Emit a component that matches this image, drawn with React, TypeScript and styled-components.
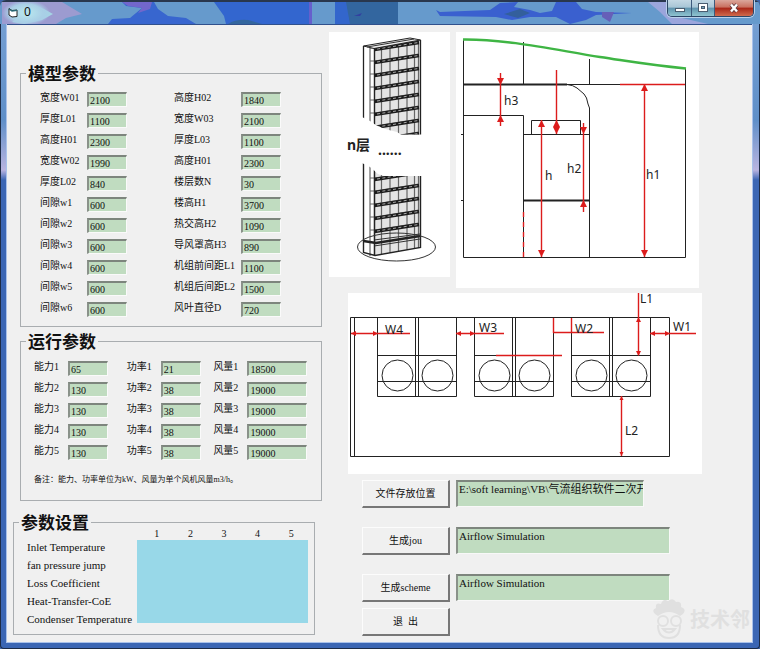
import React, { useState } from "react";
import styled, { createGlobalStyle } from "styled-components";

const GlobalStyle = createGlobalStyle`
  * { box-sizing: border-box; }
  body { margin: 0; background: #3c64ac; }
  body, button, input, textarea, legend, label {
    font-family: "Liberation Serif", "Noto Sans CJK SC", serif;
    color: #111;
  }
`;

const Window = styled.div`
  position: relative;
  display: flex;
  flex-direction: column;
  min-height: 100vh;
  padding: 0 8px 7px 7px;
  background: linear-gradient(#7aa2d4 0, #5f8fc8 120px, #b9b4e0 170px, #3b66b4 180px, #3b66b4 100%);
  border-radius: 6px 6px 4px 4px;
  box-shadow: inset 0 0 0 1px #1d2b45, inset 0 2px 0 0 #3a4a66;
  overflow: hidden;
`;

const TitleBar = styled.header`
  position: relative;
  display: flex;
  justify-content: space-between;
  height: 24px;
  margin: 0 -8px 0 -7px;
  padding: 0 6px 0 8px;
`;

const TitleGlass = styled.svg`
  position: absolute;
  inset: 0;
  width: 100%;
  height: 100%;
`;

const Caption = styled.h1`
  position: relative;
  display: flex;
  align-items: center;
  gap: 6px;
  margin: 0;
  font: 12px/24px "Noto Sans", sans-serif;
`;

const WindowButtons = styled.div`
  position: relative;
  display: flex;
  height: 17px;
  border: 1px solid #2c4666;
  border-top: 0;
  border-radius: 0 0 5px 5px;
  box-shadow: 0 0 0 1px #b9d0ea;
  overflow: hidden;
`;

const WindowButton = styled.button<{ $close?: boolean }>`
  display: grid;
  place-items: center;
  width: ${(p) => (p.$close ? 39 : 23)}px;
  padding: 0;
  border: 0;
  border-left: 1px solid #3d5a7c;
  background: ${(p) =>
    p.$close
      ? "linear-gradient(#dba79c 0, #c9705f 45%, #a92617 50%, #cf6a4d 100%)"
      : "linear-gradient(#c3d8e4 0, #a8c6d6 45%, #5f93ae 50%, #8fc4d0 100%)"};
  &:first-child { border-left: 0; }
`;

const Client = styled.main`
  flex: 1;
  display: grid;
  grid-template-columns: 315fr 373fr;
  column-gap: 7px;
  padding-right: 50px;
  background: #f0f0f0;
  border-top: 1px solid #30508c;
  box-shadow: 0 0 0 1px #a9c1ea;
`;

const Parameters = styled.div`
  display: flex;
  flex-direction: column;
  padding: 42px 0 0 13px;
`;

const Group = styled.fieldset<{ $wide?: boolean }>`
  min-width: 0;
  margin: ${(p) => (p.$wide ? "7px 7px 0 -7px" : "0 0 8px 0")};
  padding: 0;
  border: 1px solid #a9adb0;
`;

const GroupTitle = styled.legend`
  margin-left: 5px;
  padding: 0 2px;
  font: bold 17px/12px "Noto Sans CJK SC", sans-serif;
`;

const ModelGrid = styled.div`
  display: grid;
  grid-template-columns: 134fr 147fr;
  padding: 10px 0 6px 19px;
`;

const Column = styled.div``;

const ModelRow = styled.div<{ $label: number }>`
  display: grid;
  grid-template-columns: ${(p) => p.$label}px 40px;
  align-items: center;
  height: 21px;
`;

const FieldLabel = styled.label`
  font-size: 10px;
  line-height: 16px;
  padding-bottom: 3px;
  white-space: nowrap;
`;

const NumberBox = styled.input`
  width: 100%;
  height: 15px;
  padding: 1px 0 0 1px;
  border: 1px solid #fafafa;
  border-top: 2px solid #7d857d;
  border-left: 2px solid #8a928a;
  border-radius: 0;
  background: #c0dcc0;
  font-size: 10px;
  line-height: 11px;
`;

const RunGrid = styled.div`
  display: grid;
  grid-template-columns: 93fr 87fr 108fr;
  padding: 11px 0 0 13px;
`;

const RunRow = styled.div<{ $box: number }>`
  display: grid;
  grid-template-columns: 34px ${(p) => p.$box}px;
  align-items: center;
  height: 21px;
`;

const Note = styled.p`
  margin: 11px 0 14px 13px;
  font-size: 8px;
  line-height: 12px;
`;

const SettingsGrid = styled.div`
  display: grid;
  grid-template-columns: 123fr 171fr;
  padding: 0 6px 6px 0;
`;

const SettingNames = styled.ul`
  margin: 10px 0 0;
  padding: 0 0 0 13px;
  list-style: none;
  font-size: 11px;
  line-height: 18px;
  white-space: nowrap;
`;

const SettingHeads = styled.div`
  display: grid;
  grid-template-columns: repeat(5, 1fr);
  padding: 0 0 0 3px;
  font-size: 10px;
  line-height: 12px;
  text-align: center;
`;

const SettingArea = styled.div`
  height: 83px;
  background: #98d8e8;
`;

const Workspace = styled.div`
  display: flex;
  flex-direction: column;
  padding-top: 7px;
`;

const Views = styled.div`
  display: grid;
  grid-template-columns: 121fr 243fr;
  column-gap: 6px;
  align-items: start;
  padding-right: 3px;
`;

const Drawing = styled.svg`
  display: block;
  width: 100%;
  overflow: visible;
  background: #fff;
  text {
    font-family: "Noto Sans", "Noto Sans CJK SC", sans-serif;
    font-size: 12px;
    fill: #222;
  }
  text.floor {
    font-size: 14px;
    font-weight: bold;
  }
`;

const PlanView = styled.div`
  margin: 5px 0 0 19px;
`;

const Actions = styled.form`
  display: flex;
  flex-direction: column;
  padding: 6px 0 6px 33px;
`;

const ActionRow = styled.div<{ $space: number }>`
  display: grid;
  grid-template-columns: 88px minmax(0, 1fr);
  column-gap: 6px;
  margin-bottom: ${(p) => p.$space}px;
  padding-right: 32px;
`;

const ActionButton = styled.button`
  height: 28px;
  padding: 0;
  border: 1px solid #fcfcfc;
  border-right: 2px solid #777;
  border-bottom: 2px solid #777;
  background: #f0f0f0;
  font-size: 10px;
  line-height: 16px;
`;

const PathBox = styled.textarea<{ $short?: boolean }>`
  width: ${(p) => (p.$short ? 88 : 100)}%;
  height: 27px;
  padding: 0 0 0 1px;
  border: 1px solid #f8f8f8;
  border-top: 2px solid #7d857d;
  border-left: 2px solid #8a928a;
  border-radius: 0;
  background: #c0dcc0;
  font-size: 11px;
  line-height: 14px;
  white-space: pre;
  overflow: hidden;
  resize: none;
`;

const Watermark = styled.div`
  position: absolute;
  right: 10px;
  bottom: 9px;
  display: flex;
  align-items: center;
  gap: 4px;
  color: #e0e0e0;
  font: bold 20px/24px "Noto Sans CJK SC", sans-serif;
  pointer-events: none;
`;

const modelColumns: { label: number; rows: [string, string][] }[] = [
  {
    label: 47,
    rows: [
      ["宽度W01", "2100"], ["厚度L01", "1100"], ["高度H01", "2300"], ["宽度W02", "1990"],
      ["厚度L02", "840"], ["间隙w1", "600"], ["间隙w2", "600"], ["间隙w3", "600"],
      ["间隙w4", "600"], ["间隙w5", "600"], ["间隙w6", "600"],
    ],
  },
  {
    label: 67,
    rows: [
      ["高度H02", "1840"], ["宽度W03", "2100"], ["厚度L03", "1100"], ["高度H01", "2300"],
      ["楼层数N", "30"], ["楼高H1", "3700"], ["热交高H2", "1090"], ["导风罩高H3", "890"],
      ["机组前间距L1", "1100"], ["机组后间距L2", "1500"], ["风叶直径D", "720"],
    ],
  },
];

const runColumns = [
  { name: "能力", box: 40, values: ["65", "130", "130", "130", "130"] },
  { name: "功率", box: 40, values: ["21", "38", "38", "38", "38"] },
  { name: "风量", box: 60, values: ["18500", "19000", "19000", "19000", "19000"] },
];

const settingNames = [
  "Inlet Temperature",
  "fan pressure jump",
  "Loss Coefficient",
  "Heat-Transfer-CoE",
  "Condenser Temperature",
];

const RED = "#dc1c1c";

type Dir = "up" | "down" | "left" | "right";

function Head({ x, y, dir, size = 7 }: { x: number; y: number; dir: Dir; size?: number }) {
  const h = size / 2;
  const points = {
    up: `${x},${y} ${x - h},${y + size} ${x + h},${y + size}`,
    down: `${x},${y} ${x - h},${y - size} ${x + h},${y - size}`,
    left: `${x},${y} ${x + size},${y - h} ${x + size},${y + h}`,
    right: `${x},${y} ${x - size},${y - h} ${x - size},${y + h}`,
  }[dir];
  return <polygon points={points} fill={RED} />;
}

function TowerDrawing() {
  const upper = [41, 54, 67, 80, 93, 106, 119, 132];
  const lower = [171, 184, 197, 210, 223];
  const posts = [370, 374.5, 381.5, 390, 398.5, 407, 414.5, 418.5];
  const floor = (y: number) => (
    <g key={y}>
      <path d={`M370 ${y + 7}h4.5L419 ${y}`} fill="none" stroke="#666" />
      <path d={`M374.5 ${y + 8.5}L419 ${y + 1.5}`} stroke="#1c1c1c" strokeWidth="3.4" />
      <path d={`M377 ${y + 8}L419 ${y + 1.4}`} stroke="#aaa" strokeDasharray="3 2.4" />
    </g>
  );
  return (
    <Drawing viewBox="329 32 121 245" role="img" aria-label="n层">
      <defs>
        <clipPath id="tower-top"><path d="M360 30H424V134.5H401L397 132 385 129 376 125 370 121 362 117Z" /></clipPath>
        <clipPath id="tower-base"><path d="M360 162L370 167 378 174 384 176H424V262H360Z" /></clipPath>
      </defs>
      <g clipPath="url(#tower-top)">
        <path d="M374.5 47L420 40V135H374.5Z" fill="#e4e4e4" />
        {posts.map((x) => <path key={x} d={`M${x} ${48 - (x - 370) / 7}V140`} stroke="#666" strokeWidth="1.2" />)}
        {upper.map(floor)}
        <path d="M363.5 46L410 38L420.5 40L374 48.5Z" fill="#eee" stroke="#222" />
        <path d="M367 47L414 39" stroke="#333" />
        <path d="M363.5 46V140M420.5 40V140M374.5 48V140" fill="none" stroke="#222" strokeWidth="1.3" />
      </g>
      <g clipPath="url(#tower-base)">
        <path d="M374.5 160H420V248L374.5 255Z" fill="#e4e4e4" />
        {posts.map((x) => <path key={x} d={`M${x} 160V${256 - (x - 370) / 6}`} stroke="#666" strokeWidth="1.2" />)}
        {lower.map(floor)}
        <path d="M363.5 241L376 243L420 236" fill="none" stroke="#222" strokeWidth="2.6" />
        <path d="M374 240L420 234M374 246L420 239" stroke="#333" />
        <path d="M363.5 160V252.5L375 255.5L420.5 247.5V160M374.5 160V255" fill="none" stroke="#222" strokeWidth="1.4" />
      </g>
      <ellipse cx="396.5" cy="247" rx="39" ry="14" fill="none" stroke="#333" />
      <text className="floor" x="347" y="150">n层</text>
      <text className="floor" x="378" y="155">......</text>
    </Drawing>
  );
}

function SectionDrawing() {
  return (
    <Drawing viewBox="456 32 243 256" role="img" aria-label="h h1 h2 h3">
      <g fill="none" stroke="#222">
        <path d="M463.5 39V257.5H685.5V68" />
        <path d="M523.5 42V84M589.5 59V84M463 84.5H685" />
        <path d="M463 84.5H567" strokeWidth="2" />
        <path d="M567 84.5Q573 85 577 88L584 94Q587 97 588 104L589.5 108V257" />
        <path d="M463 115.5H523.5V257M461 134.5H464M461 200.5H464" />
        <path d="M531.5 134V120.5H580.5V134M523 134.5H590" />
        <path d="M523 200.5H590" strokeWidth="2" />
      </g>
      <path d="M463 39.5C510 39 560 51 600 57S650 65 686 68.5" fill="none" stroke="#3fb544" strokeWidth="2.4" />
      <g stroke={RED} fill="none" strokeWidth="1.4">
        <path d="M620 84.5H685" />
        <path d="M523.5 212V257" strokeDasharray="5 5" />
        <path d="M500.5 73V126M556.5 70V134M541.5 120V257M583.5 123V212M644.5 84V257" />
      </g>
      <Head x={500.5} y={85} dir="down" />
      <Head x={500.5} y={115} dir="up" />
      <Head x={556.5} y={120} dir="up" />
      <Head x={556.5} y={134} dir="down" />
      <Head x={541.5} y={120} dir="up" />
      <Head x={541.5} y={257} dir="down" />
      <Head x={583.5} y={134} dir="down" />
      <Head x={583.5} y={200} dir="up" />
      <Head x={644.5} y={84} dir="up" />
      <Head x={644.5} y={257} dir="down" />
      <text x="504" y="105">h3</text>
      <text x="545" y="180">h</text>
      <text x="567" y="173">h2</text>
      <text x="646" y="179">h1</text>
    </Drawing>
  );
}

function PlanDrawing() {
  return (
    <Drawing viewBox="348 293 354 181" role="img" aria-label="W1 W2 W3 W4 L1 L2">
      <g fill="none" stroke="#222">
        <path d="M350.5 317.5H669.5V456.5H350.5ZM354.5 317V456" />
        {[377.5, 474.5, 571.5].map((x) => (
          <g key={x}>
            <path d={`M${x} 317V396.5H${x + 79}V317M${x} 355.5H${x + 79}M${x} 381.5H${x + 79}`} />
            <path d={`M${x + 38} 317V396M${x + 41} 317V396`} />
            <circle cx={x + 20} cy="375.5" r="15.5" />
            <circle cx={x + 60} cy="375.5" r="15.5" />
          </g>
        ))}
      </g>
      <g stroke={RED} fill="none" strokeWidth="1.4">
        <path d="M351 333.5H410M456 333.5H504M553 332.5H604M650 333.5H696" />
        <path d="M553.5 318V333M571.5 318V333M496 355.5H562" />
        <path d="M638.5 293V355M621.5 396V456" />
      </g>
      <Head x={351} y={333.5} dir="left" size={5} />
      <Head x={378} y={333.5} dir="right" size={5} />
      <Head x={456} y={333.5} dir="left" size={5} />
      <Head x={475} y={333.5} dir="right" size={5} />
      <Head x={650} y={333.5} dir="left" size={5} />
      <Head x={670} y={333.5} dir="right" size={5} />
      <Head x={638.5} y={317} dir="up" size={5} />
      <Head x={638.5} y={356} dir="down" size={5} />
      <Head x={621.5} y={396} dir="up" size={4} />
      <Head x={621.5} y={456} dir="down" size={4} />
      <text x="385" y="334">W4</text>
      <text x="479" y="332">W3</text>
      <text x="575" y="333">W2</text>
      <text x="673" y="331">W1</text>
      <text x="640" y="303">L1</text>
      <text x="625" y="435">L2</text>
    </Drawing>
  );
}

function TitleBackground() {
  return (
    <TitleGlass viewBox="0 0 760 24" preserveAspectRatio="none" aria-hidden="true">
      <defs>
        <radialGradient id="glow">
          <stop offset="0.2" stopColor="#b5e2ec" />
          <stop offset="0.7" stopColor="#a9cfe6" />
          <stop offset="1" stopColor="#a9c8e8" stopOpacity="0" />
        </radialGradient>
      </defs>
      <rect width="760" height="24" fill="#669acc" />
      <path d="M2 2H62L82 14 66 18 56 24H2Z" fill="#9c9bd0" />
      <path d="M34 5L44 9 53 14 42 20 24 24 12 22Z" fill="#a5d4e4" />
      <ellipse cx="26" cy="13" rx="24" ry="13" fill="url(#glow)" />
      <path d="M108 24L112 19 130 18 142 8 126 6 122 2H154L158 9 168 16 186 18 196 24Z" fill="#3866cf" />
      <path d="M122 2H152L150 9 138 13 142 8 128 6Z" fill="#7267cc" />
      <path d="M214 2H312V24H226L224 16Z" fill="#3366cf" />
      <path d="M228 24Q236 19 248 20L262 24Z" fill="#33669e" />
      <path d="M309 2H312V24H309Z" fill="#665fcc" />
      <path d="M335 2H398V24H335Z" fill="#3366cc" />
      <path d="M346 2H398V24H350Z" fill="#33669f" />
      <path d="M354 16L362 13 360 16Z" fill="#3340a0" />
      <path d="M436 10L440 12 490 10 500 3 518 2 514 7 530 10 540 13 552 11 556 2H576L582 9 596 12 632 13 596 15 586 20 570 24 556 17 530 17 512 20 496 17 440 16Z" fill="#3a60cf" />
      <path d="M504 14L520 9 530 13 518 18Z" fill="#335f9c" />
      <path d="M602 12H614L610 22 602 17Z" fill="#665fb8" />
      <path d="M648 2H670L682 18 708 24H672L660 12Z" fill="#9ba5dc" />
      <path d="M0 1H760" stroke="#29374e" strokeWidth="2" />
    </TitleGlass>
  );
}

export default function App() {
  const [picked, setPicked] = useState("E:\\soft learning\\VB\\气流组织软件二次开发");
  return (
    <>
      <GlobalStyle />
      <Window>
        <TitleBar>
          <TitleBackground />
          <Caption>
            <svg width="10" height="11" viewBox="0 0 10 11" aria-hidden="true">
              <path d="M1 1.5L4 3.5 9 3V9.5L4 10 1 8Z" fill="#fff" stroke="#222" />
              <path d="M1 2L4 4 9 3.4" fill="none" stroke="#2a6a76" strokeWidth="1.4" />
            </svg>
            0
          </Caption>
          <WindowButtons>
            <WindowButton type="button" aria-label="最小化">
              <svg width="12" height="10" viewBox="0 0 12 10"><rect x="1.5" y="5.5" width="9" height="3" fill="#fff" stroke="#4a5d70" /></svg>
            </WindowButton>
            <WindowButton type="button" aria-label="最大化">
              <svg width="12" height="10" viewBox="0 0 12 10">
                <rect x="1.5" y="0.5" width="9" height="8" fill="#fff" stroke="#4a5d70" />
                <rect x="4.5" y="3.5" width="3" height="2" fill="#7ba6ba" stroke="#4a5d70" />
              </svg>
            </WindowButton>
            <WindowButton type="button" aria-label="关闭" $close>
              <svg width="12" height="10" viewBox="0 0 12 10">
                <path d="M3 1.5L9 8.5M9 1.5L3 8.5" stroke="#5a3a40" strokeWidth="4" />
                <path d="M3 1.5L9 8.5M9 1.5L3 8.5" stroke="#fff" strokeWidth="2.4" />
              </svg>
            </WindowButton>
          </WindowButtons>
        </TitleBar>
        <Client>
          <Parameters>
            <Group>
              <GroupTitle>模型参数</GroupTitle>
              <ModelGrid>
                {modelColumns.map((col, c) => (
                  <Column key={c}>
                    {col.rows.map(([name, value], r) => (
                      <ModelRow key={r} $label={col.label}>
                        <FieldLabel htmlFor={`model-${c}-${r}`}>{name}</FieldLabel>
                        <NumberBox id={`model-${c}-${r}`} defaultValue={value} />
                      </ModelRow>
                    ))}
                  </Column>
                ))}
              </ModelGrid>
            </Group>
            <Group>
              <GroupTitle>运行参数</GroupTitle>
              <RunGrid>
                {runColumns.map((col, c) => (
                  <Column key={col.name}>
                    {col.values.map((value, r) => (
                      <RunRow key={r} $box={col.box}>
                        <FieldLabel htmlFor={`run-${c}-${r}`}>{col.name + (r + 1)}</FieldLabel>
                        <NumberBox id={`run-${c}-${r}`} defaultValue={value} />
                      </RunRow>
                    ))}
                  </Column>
                ))}
              </RunGrid>
              <Note>备注：能力、功率单位为kW、风量为单个风机风量m3/h。</Note>
            </Group>
            <Group $wide>
              <GroupTitle>参数设置</GroupTitle>
              <SettingsGrid>
                <SettingNames>
                  {settingNames.map((name) => <li key={name}>{name}</li>)}
                </SettingNames>
                <div>
                  <SettingHeads>
                    {[1, 2, 3, 4, 5].map((n) => <span key={n}>{n}</span>)}
                  </SettingHeads>
                  <SettingArea />
                </div>
              </SettingsGrid>
            </Group>
          </Parameters>
          <Workspace>
            <Views>
              <TowerDrawing />
              <SectionDrawing />
            </Views>
            <PlanView><PlanDrawing /></PlanView>
            <Actions onSubmit={(e) => e.preventDefault()}>
              <ActionRow $space={19}>
                <ActionButton type="button">文件存放位置</ActionButton>
                <PathBox $short aria-label="文件存放位置" rows={1} value={picked} onChange={(e) => setPicked(e.target.value)} />
              </ActionRow>
              <ActionRow $space={19}>
                <ActionButton type="button">生成jou</ActionButton>
                <PathBox aria-label="生成jou" rows={1} defaultValue="Airflow Simulation" />
              </ActionRow>
              <ActionRow $space={6}>
                <ActionButton type="button">生成scheme</ActionButton>
                <PathBox aria-label="生成scheme" rows={1} defaultValue="Airflow Simulation" />
              </ActionRow>
              <ActionRow $space={0}>
                <ActionButton type="button">退&nbsp; 出</ActionButton>
              </ActionRow>
            </Actions>
          </Workspace>
        </Client>
        <Watermark>
          <svg width="34" height="42" viewBox="0 0 34 42" fill="none" stroke="#e0e0e0" strokeWidth="2" aria-hidden="true">
            <path d="M3 16Q-1 12 4 10 3 4 9 6 11 0 16 3 21-1 24 4 30 3 29 9 35 11 31 16L28 18Q17 10 6 18Z" fill="#e0e0e0" stroke="none" />
            <circle cx="11" cy="23" r="5" />
            <circle cx="24" cy="23" r="5" />
            <path d="M6 27Q6 40 17 40T28 27M11 31Q17 38 23 31Z" />
          </svg>
          技术邻
        </Watermark>
      </Window>
    </>
  );
}
